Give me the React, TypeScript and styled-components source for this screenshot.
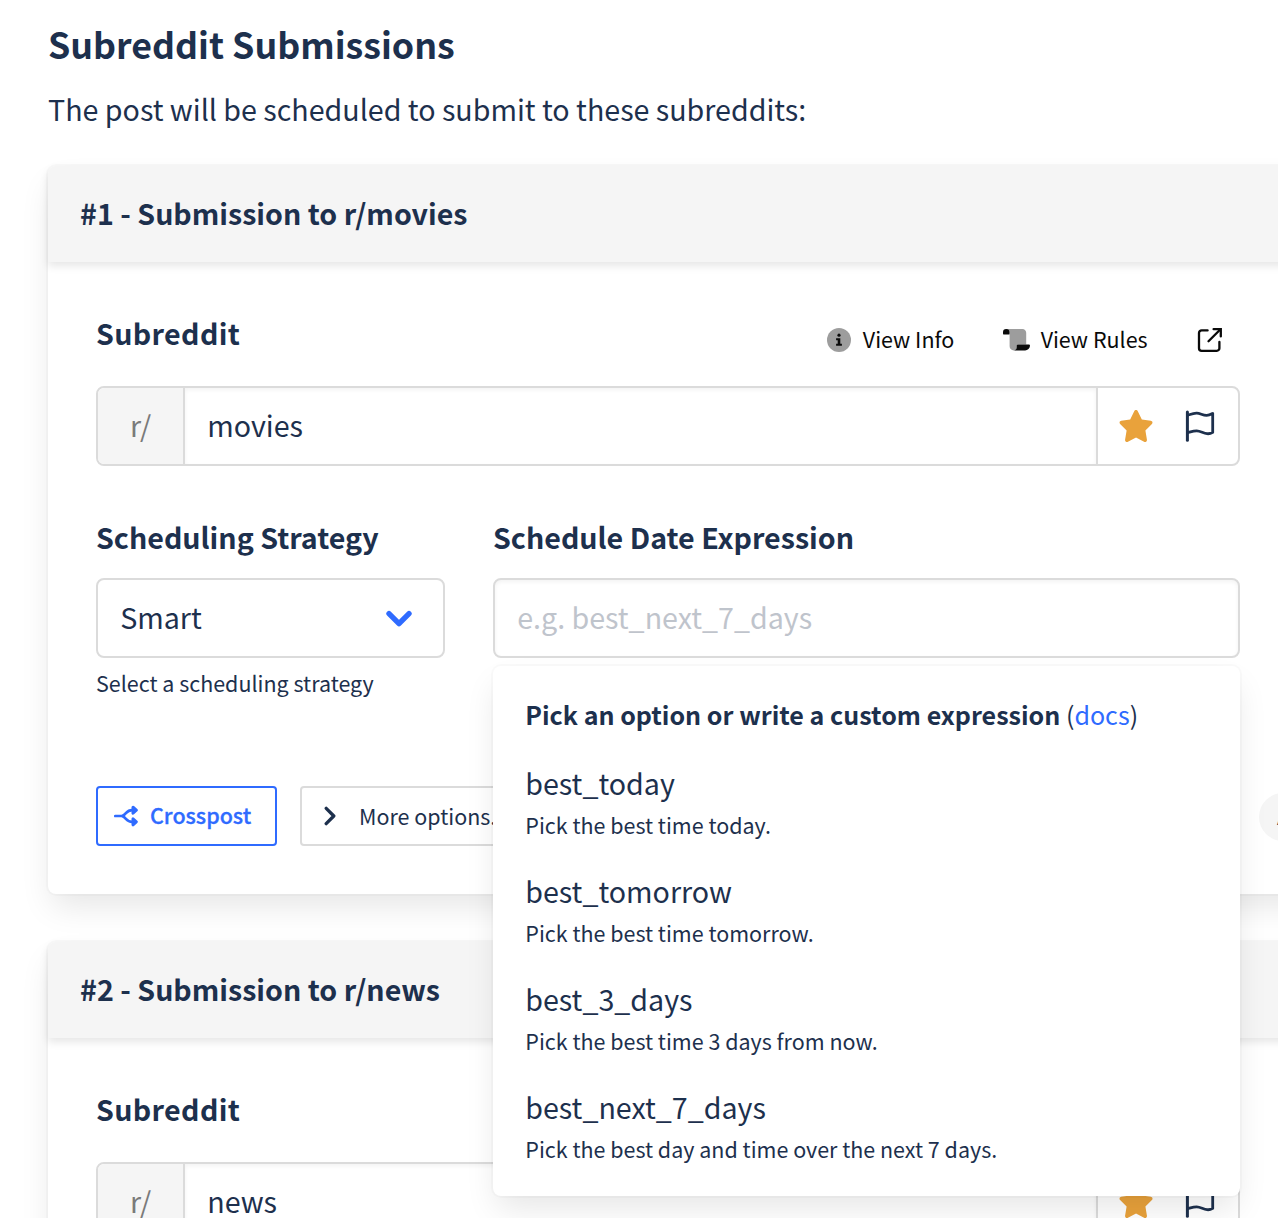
import React from 'react';
import styled, { createGlobalStyle, css } from 'styled-components';
import { FaStar } from 'react-icons/fa6';

const ink = '#1d304d';
const blue = '#2f6bff';
const line = '#dbdbdb';

const GlobalStyle = createGlobalStyle`
  *, *::before, *::after { box-sizing: border-box; }
  body {
    margin: 0;
    background: #fff;
    color: ${ink};
    font-family: "Noto Sans CJK SC", "Open Sans", sans-serif;
    font-size: 28.63px;
    line-height: 46px;
  }
  h1, h2, p { margin: 0; }
  button, input { font: inherit; color: inherit; }
`;

const smallText = css`
  font-size: 21.47px;
  line-height: 34px;
  padding-bottom: 2px;
`;

const Page = styled.main`
  width: 100%;
  height: 1218px;
  overflow: hidden;
  padding: 20px 0 0 48px;
`;

const PageTitle = styled.h1`
  font-size: 35.75px;
  font-weight: 700;
  line-height: 48px;
`;

const Intro = styled.p`
  margin-top: 18px;
  height: 48px;
`;

const CardList = styled.div`
  display: flex;
  flex-direction: column;
  gap: 48px;
  margin-top: 32px;
`;

const Card = styled.section`
  width: 1352px;
  border-radius: 8px;
  background: #fff;
  box-shadow: 0 16px 32px -4px rgba(10, 10, 10, 0.1), 0 0 0 2px rgba(10, 10, 10, 0.02);
`;

const CardHeader = styled.header`
  height: 96px;
  padding: 24px 32px;
  border-radius: 8px 8px 0 0;
  background: #f5f5f5;
  box-shadow: 0 4px 8px rgba(10, 10, 10, 0.1);
`;

const CardTitle = styled.h2`
  font-size: 28.6px;
  line-height: 46px;
  font-weight: 700;
`;

const CardBody = styled.div`
  padding: 48px;
`;

const Fields = styled.div`
  width: 1144px;
`;

const Label = styled.label<{ $wide?: boolean }>`
  display: block;
  height: 48px;
  font-weight: 700;
  letter-spacing: ${p => (p.$wide ? '0.36px' : 'normal')};
  white-space: nowrap;
`;

const LabelRow = styled.div`
  display: flex;
  justify-content: space-between;
  height: 60px;
  margin-bottom: 16px;
`;

const Actions = styled.div`
  display: flex;
  gap: 8px;
`;

const TextButton = styled.button`
  display: flex;
  align-items: center;
  gap: 6px;
  height: 60px;
  padding: 0 24.4px 0 12px;
  border: 0;
  background: none;
  color: #0a0a0a;
`;

const SquareButton = styled(TextButton)`
  justify-content: center;
  width: 60px;
  padding: 0;
`;

const ButtonText = styled.span<{ $strong?: boolean; $low?: boolean }>`
  ${smallText}
  padding-bottom: ${p => (p.$low ? 0 : 2)}px;
  font-weight: ${p => (p.$strong ? 500 : 400)};
  ${p => p.$strong && '-webkit-text-stroke: 0.3px currentColor;'}
  white-space: nowrap;
`;

const IconSlot = styled.span`
  display: flex;
  align-items: center;
  justify-content: center;
  width: 36px;
  height: 36px;
  svg { flex: none; }
`;

const InputGroup = styled.div`
  display: flex;
  height: 80px;
  border: 2px solid ${line};
  border-radius: 8px;
  overflow: hidden;
`;

const Prefix = styled.span`
  width: 87px;
  padding-top: 14px;
  border-right: 2px solid ${line};
  background: #f5f5f5;
  color: #7a7a7a;
  text-align: center;
`;

const GroupInput = styled.div`
  flex: 1;
  padding: 14px 22.2px;
  box-shadow: inset 0 2px 4px rgba(10, 10, 10, 0.05);
`;

const GroupIcons = styled.div`
  display: flex;
  align-items: center;
  gap: 30px;
  width: 142px;
  padding-left: 20px;
  border-left: 2px solid ${line};
`;

const Columns = styled.div`
  display: grid;
  grid-template-columns: 349px 747px;
  column-gap: 48px;
  margin-top: 48px;
`;

const Column = styled.div`
  ${Label} { margin-bottom: 16px; }
`;

const Control = styled.div<{ $inset?: boolean }>`
  display: flex;
  justify-content: space-between;
  height: 80px;
  padding: 14px 22.2px;
  border: 2px solid ${line};
  border-radius: 8px;
  ${p => p.$inset && 'box-shadow: inset 0 2px 4px rgba(10, 10, 10, 0.05);'}
`;

const SelectIcon = styled.span`
  display: flex;
  align-items: center;
  margin-right: 8.8px;
  padding-top: 2px;
`;

const Placeholder = styled.span`
  color: #bfc4cc;
`;

const Help = styled.p`
  ${smallText}
  margin-top: 8px;
`;

const DropdownAnchor = styled.div`
  position: relative;
`;

const Dropdown = styled.div`
  position: absolute;
  z-index: 10;
  top: calc(100% + 8px);
  left: 0;
  width: 100%;
  padding: 16px 0;
  border-radius: 8px;
  background: #fff;
  box-shadow: 0 16px 32px -4px rgba(10, 10, 10, 0.1), 0 0 0 2px rgba(10, 10, 10, 0.02);
`;

const DropdownTitle = styled.p`
  height: 66px;
  padding: 12px 32.3px;
  font-size: 25.05px;
  line-height: 40px;
  a { color: ${blue}; text-decoration: none; }
`;

const Option = styled.div`
  height: 108px;
  padding: 12px 32.3px;
`;

const OptionName = styled.div`
  height: 48px;
`;

const OptionHint = styled.div`
  ${smallText}
`;

const Footer = styled.div`
  display: flex;
  align-items: center;
  gap: 23.3px;
  height: 60px;
  margin-top: 84px;
`;

const OutlineButton = styled.button<{ $primary?: boolean }>`
  display: flex;
  align-items: center;
  gap: ${p => (p.$primary ? 6 : 10.6)}px;
  height: 60px;
  padding: 0 ${p => (p.$primary ? 24 : 28)}px 0 10px;
  border: 2px solid ${p => (p.$primary ? blue : line)};
  border-radius: 4px;
  background: #fff;
  color: ${p => (p.$primary ? blue : ink)};
`;

const Tag = styled.span`
  ${smallText}
  width: 93px;
  height: 48px;
  margin: 2px 0 0 auto;
  padding: 6px 18px;
  border-radius: 24px;
  background: #f5f5f5;
`;

const InfoIcon = () => (
  <svg width="24" height="24" viewBox="0 0 24 24">
    <circle cx="12" cy="12" r="12" fill="#9d9d9d" />
    <circle cx="12" cy="7.2" r="1.6" fill="#0a0a0a" />
    <path d="M9.1 10.2h4.2v5.6h1.6v2H9.1v-2h1.6v-3.6H9.1z" fill="#0a0a0a" />
  </svg>
);

const ScrollIcon = () => (
  <svg width="27" height="22" viewBox="0 0 27 22">
    <path d="M3 0h16.5A3.8 3.8 0 0 1 23.2 4v11.5H14v2.8a3 3 0 0 1-3 3.1 4.2 4.2 0 0 1-4.4-4.2V5.2z" fill="#9d9d9d" />
    <path d="M3.2 0a3.2 3.2 0 0 1 3.2 3.2v2.4H1.2A1.2 1.2 0 0 1 0 4.4V3.2A3.2 3.2 0 0 1 3.2 0z" fill="#0a0a0a" />
    <path d="M14.8 15.6h11A1.1 1.1 0 0 1 27 16.7a4.9 4.9 0 0 1-4.9 4.7H11c2-.4 2.8-1.6 2.8-3.2v-1.6a1 1 0 0 1 1-1z" fill="#0a0a0a" />
  </svg>
);

const ExternalIcon = () => (
  <svg width="24" height="24" viewBox="0 0 24 24" fill="none" stroke="#0a0a0a" strokeWidth="2.3" strokeLinecap="round" overflow="visible">
    <path d="M9.6 2.4H3.6A2.6 2.6 0 0 0 1 5V20.200A2.6 2.6 0 0 0 3.600 22.800h15.200a2.600 2.600 0 0 0 2.600-2.600v-6.200" />
    <path d="M10.5 13.3L22 1.8" />
    <path d="M15.6 1.2h7.2v7.200" strokeLinejoin="miter" />
  </svg>
);

const FlagIcon = () => (
  <svg width="32" height="36" viewBox="0 0 32 36" fill="none" stroke={ink} strokeWidth="3" strokeLinecap="round" strokeLinejoin="round">
    <path d="M3.4 4v28.2" />
    <path d="M3.4 7.3C6.5 6.3 9.5 5 12.7 5.1 16.3 5.2 18.8 7.5 22.7 7.4c2.3 0 4-.9 6-1.9v18.9c-1.8 1.1-3.6 1.5-5.6 1.3-3.9-.4-6.6-2.9-10.4-2.9-3.2 0-6.3 1.2-9.3 2" strokeWidth="2.8" />
  </svg>
);

const ChevronDown = () => (
  <svg width="26" height="18" viewBox="0 0 26 18" fill="none" stroke={blue} strokeWidth="5.4" strokeLinecap="round" strokeLinejoin="round">
    <path d="M3 3.6l10 10 10-10" />
  </svg>
);

const ChevronRight = () => (
  <svg width="12" height="20" viewBox="0 0 12 20" fill="none" stroke={ink} strokeWidth="3.3" strokeLinecap="round" strokeLinejoin="round">
    <path d="M2.2 2.3L9.8 10l-7.6 7.7" />
  </svg>
);

const SplitIcon = () => (
  <svg width="24" height="22" viewBox="0 0 24 22" fill="none" stroke={blue} strokeWidth="2.7" strokeLinecap="round">
    <path d="M1.3 11H9" />
    <path d="M8.5 11c4-2 4-5.800 9.500-5.800M8.5 11c4 2 4 5.800 9.500 5.800" />
    <path d="M19 2.200l3.300 3-3.300 3zM19 13.800l3.300 3-3.300 3z" fill={blue} strokeWidth="3" strokeLinejoin="round" />
  </svg>
);

const options = [
  { name: 'best_today', hint: 'Pick the best time today.' },
  { name: 'best_tomorrow', hint: 'Pick the best time tomorrow.' },
  { name: 'best_3_days', hint: 'Pick the best time 3 days from now.' },
  { name: 'best_next_7_days', hint: 'Pick the best day and time over the next 7 days.' },
];

function SubredditField({ name }: { name: string }) {
  return (
    <>
      <LabelRow>
        <Label $wide>Subreddit</Label>
        <Actions>
          <TextButton><IconSlot><InfoIcon /></IconSlot><ButtonText>View Info</ButtonText></TextButton>
          <TextButton><IconSlot><ScrollIcon /></IconSlot><ButtonText>View Rules</ButtonText></TextButton>
          <SquareButton><ExternalIcon /></SquareButton>
        </Actions>
      </LabelRow>
      <InputGroup>
        <Prefix>r/</Prefix>
        <GroupInput>{name}</GroupInput>
        <GroupIcons><FaStar size={36} color="#e9a23b" /><FlagIcon /></GroupIcons>
      </InputGroup>
    </>
  );
}

function ExpressionDropdown() {
  return (
    <Dropdown>
      <DropdownTitle><strong>Pick an option or write a custom expression</strong> (<a>docs</a>)</DropdownTitle>
      {options.map(o => (
        <Option key={o.name}>
          <OptionName>{o.name}</OptionName>
          <OptionHint>{o.hint}</OptionHint>
        </Option>
      ))}
    </Dropdown>
  );
}

function Submission({ index, name, open }: { index: number; name: string; open?: boolean }) {
  return (
    <Card>
      <CardHeader><CardTitle>#{index} - Submission to r/{name}</CardTitle></CardHeader>
      <CardBody>
        <Fields>
          <SubredditField name={name} />
          {open && (
            <Columns>
              <Column>
                <Label>Scheduling Strategy</Label>
                <Control>Smart<SelectIcon><ChevronDown /></SelectIcon></Control>
                <Help>Select a scheduling strategy</Help>
              </Column>
              <Column>
                <Label>Schedule Date Expression</Label>
                <DropdownAnchor>
                  <Control $inset><Placeholder>e.g. best_next_7_days</Placeholder></Control>
                  <ExpressionDropdown />
                </DropdownAnchor>
              </Column>
            </Columns>
          )}
        </Fields>
        {open && (
          <Footer>
            <OutlineButton $primary><IconSlot><SplitIcon /></IconSlot><ButtonText $strong>Crosspost</ButtonText></OutlineButton>
            <OutlineButton><IconSlot><ChevronRight /></IconSlot><ButtonText $low>More options...</ButtonText></OutlineButton>
            <Tag>A</Tag>
          </Footer>
        )}
      </CardBody>
    </Card>
  );
}

export default function App() {
  return (
    <>
      <GlobalStyle />
      <Page>
        <PageTitle>Subreddit Submissions</PageTitle>
        <Intro>The post will be scheduled to submit to these subreddits:</Intro>
        <CardList>
          <Submission index={1} name="movies" open />
          <Submission index={2} name="news" />
        </CardList>
      </Page>
    </>
  );
}
